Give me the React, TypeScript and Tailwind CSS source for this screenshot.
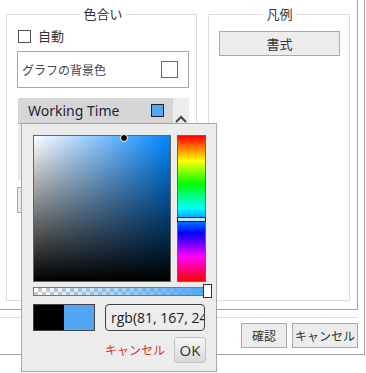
import React from "react";

const jp = { fontFamily: '"Noto Sans CJK JP", "Noto Sans", sans-serif' };

const ColorPopup: React.FC = () => {
        return (
                <div className="absolute left-[21px] top-[123px] w-[196px] h-[249px] bg-[#ececec] border border-[#a8a8a8] pl-[11px] pt-[11px]">
                        <div className="flex gap-[6px]">
                                <div className="relative w-[138px] h-[147px] border border-[#666] [background:linear-gradient(to_top,#000,rgba(0,0,0,0)),linear-gradient(to_right,#fff,rgba(255,255,255,0)),#0086ff]">
                                        <div className="absolute left-[86px] -top-[2px] w-[8px] h-[8px] rounded-full bg-black border-[1.5px] border-white" />
                                </div>
                                <div className="relative w-[29px] h-[147px] border border-[#666] bg-[linear-gradient(to_bottom,#f00_0%,#ff0_17%,#0f0_33%,#0ff_50%,#00f_67%,#f0f_83%,#f00_100%)]">
                                        <div className="absolute -left-px -right-px top-[81px] h-[5px] bg-[#c4e2ff] border border-[#222]" />
                                </div>
                        </div>
                        <div className="relative mt-[5px] w-[173px] h-[9px] border border-[#777] [background:linear-gradient(to_right,rgba(81,167,245,0),rgb(81,167,245)),repeating-conic-gradient(#c8c8c8_0_25%,#fff_0_50%)_0_0/8px_8px]">
                                <div className="absolute -right-[7px] -top-[4px] w-[9px] h-[14px] bg-white border border-[#333]" />
                        </div>
                        <div className="flex mt-[8px] gap-[10px]">
                                <div className="flex w-[62px] h-[27px] border border-[#444]">
                                        <div className="w-[30px] bg-black" />
                                        <div className="flex-1 bg-[#51a7f5]" />
                                </div>
                                <div
                                        className="w-[100px] h-[27px] rounded-[4px] border border-[#444] pl-[5px] overflow-hidden whitespace-nowrap text-[14px] leading-[25px] text-[#222]"
                                        style={{ fontFamily: '"Open Sans", sans-serif' }}
                                >
                                        rgb(81, 167, 245)
                                </div>
                        </div>
                        <div className="flex items-center justify-end w-[173px] mt-[6px] gap-[9px]">
                                <span className="text-[12px] text-[#dd3333]" style={jp}>
                                        キャンセル
                                </span>
                                <button
                                        className="w-[32px] h-[26px] rounded-[3px] border border-[#c4c4c4] bg-[linear-gradient(to_bottom,#f6f6f6,#d8d8d8)] text-[15px] text-[#333] leading-none"
                                        style={{ fontFamily: '"Open Sans", sans-serif' }}
                                >
                                        OK
                                </button>
                        </div>
                </div>
        );
};

export default function App() {
        return (
                <div className="relative w-[366px] h-[373px] overflow-hidden bg-white text-[#333]" style={jp}>
                        <div className="w-[365px] h-[355px] border-r border-b border-[#a0a0a0]">
                                <div className="flex w-[358px] h-[310px] border-r border-b border-[#a0a0a0] pl-[6px] pt-[6px] gap-[11px]">
                                        <fieldset className="w-[191px] h-[295px] border border-[#dcdcdc] pl-[10px] pr-[7px]">
                                                <legend className="mx-auto px-[3px] text-[13px] leading-[16px] text-[#333]">色合い</legend>
                                                <label className="flex items-center gap-[7px] mt-[7px] h-[14px] ml-px">
                                                        <span className="w-[13px] h-[13px] border border-[#555] bg-white" />
                                                        <span className="text-[13px] leading-[14px]">自動</span>
                                                </label>
                                                <div className="flex items-center justify-between mt-[8px] h-[37px] border border-[#a8a8a8] pl-[4px] pr-[10px]">
                                                        <span className="text-[12px] text-[#444]">グラフの背景色</span>
                                                        <span className="w-[17px] h-[17px] border border-[#666] bg-white" />
                                                </div>
                                                <div className="flex mt-[10px] h-[82px] ml-px">
                                                        <div className="flex-1 bg-[#ececec]">
                                                                <div className="flex items-center justify-between h-[26px] bg-[#d6d6d6] border-b border-dotted border-[#999] pl-[10px] pr-[9px]">
                                                                        <span className="text-[14px] text-[#1e1e3a]" style={{ fontFamily: '"Noto Sans", sans-serif' }}>
                                                                                Working Time
                                                                        </span>
                                                                        <span className="w-[13px] h-[13px] border border-[#222] bg-[#51a7f5]" />
                                                                </div>
                                                        </div>
                                                        <div className="w-[16px] bg-[#ececec] flex justify-center">
                                                                <svg width="12" height="8" viewBox="0 0 12 8" className="mt-[17px]">
                                                                        <path d="M1 7 L6 2 L11 7" fill="none" stroke="#444" strokeWidth="2" />
                                                                </svg>
                                                        </div>
                                                </div>
                                                <div className="mt-[7px] h-[26px] border border-[#a8a8a8] bg-[#ececec]" />
                                        </fieldset>
                                        <fieldset className="w-[142px] h-[295px] border border-[#dcdcdc] pl-[10px] pr-[9px]">
                                                <legend className="mx-auto px-[3px] text-[13px] leading-[16px] text-[#333]">凡例</legend>
                                                <button className="w-full mt-[9px] h-[25px] border border-[#a8a8a8] bg-[#ececec] text-[13px] text-[#333]">
                                                        書式
                                                </button>
                                        </fieldset>
                                </div>
                                <div className="w-[358px] mt-[7px] border-t border-[#dcdcdc] pt-[5px] flex justify-end gap-[5px]">
                                        <button className="w-[46px] h-[25px] border border-[#a8a8a8] bg-[#ececec] text-[12px] text-[#333] whitespace-nowrap">
                                                確認
                                        </button>
                                        <button className="w-[66px] h-[25px] border border-[#a8a8a8] bg-[#ececec] text-[12px] text-[#333] whitespace-nowrap">
                                                キャンセル
                                        </button>
                                </div>
                        </div>
                        <ColorPopup />
                </div>
        );
}
